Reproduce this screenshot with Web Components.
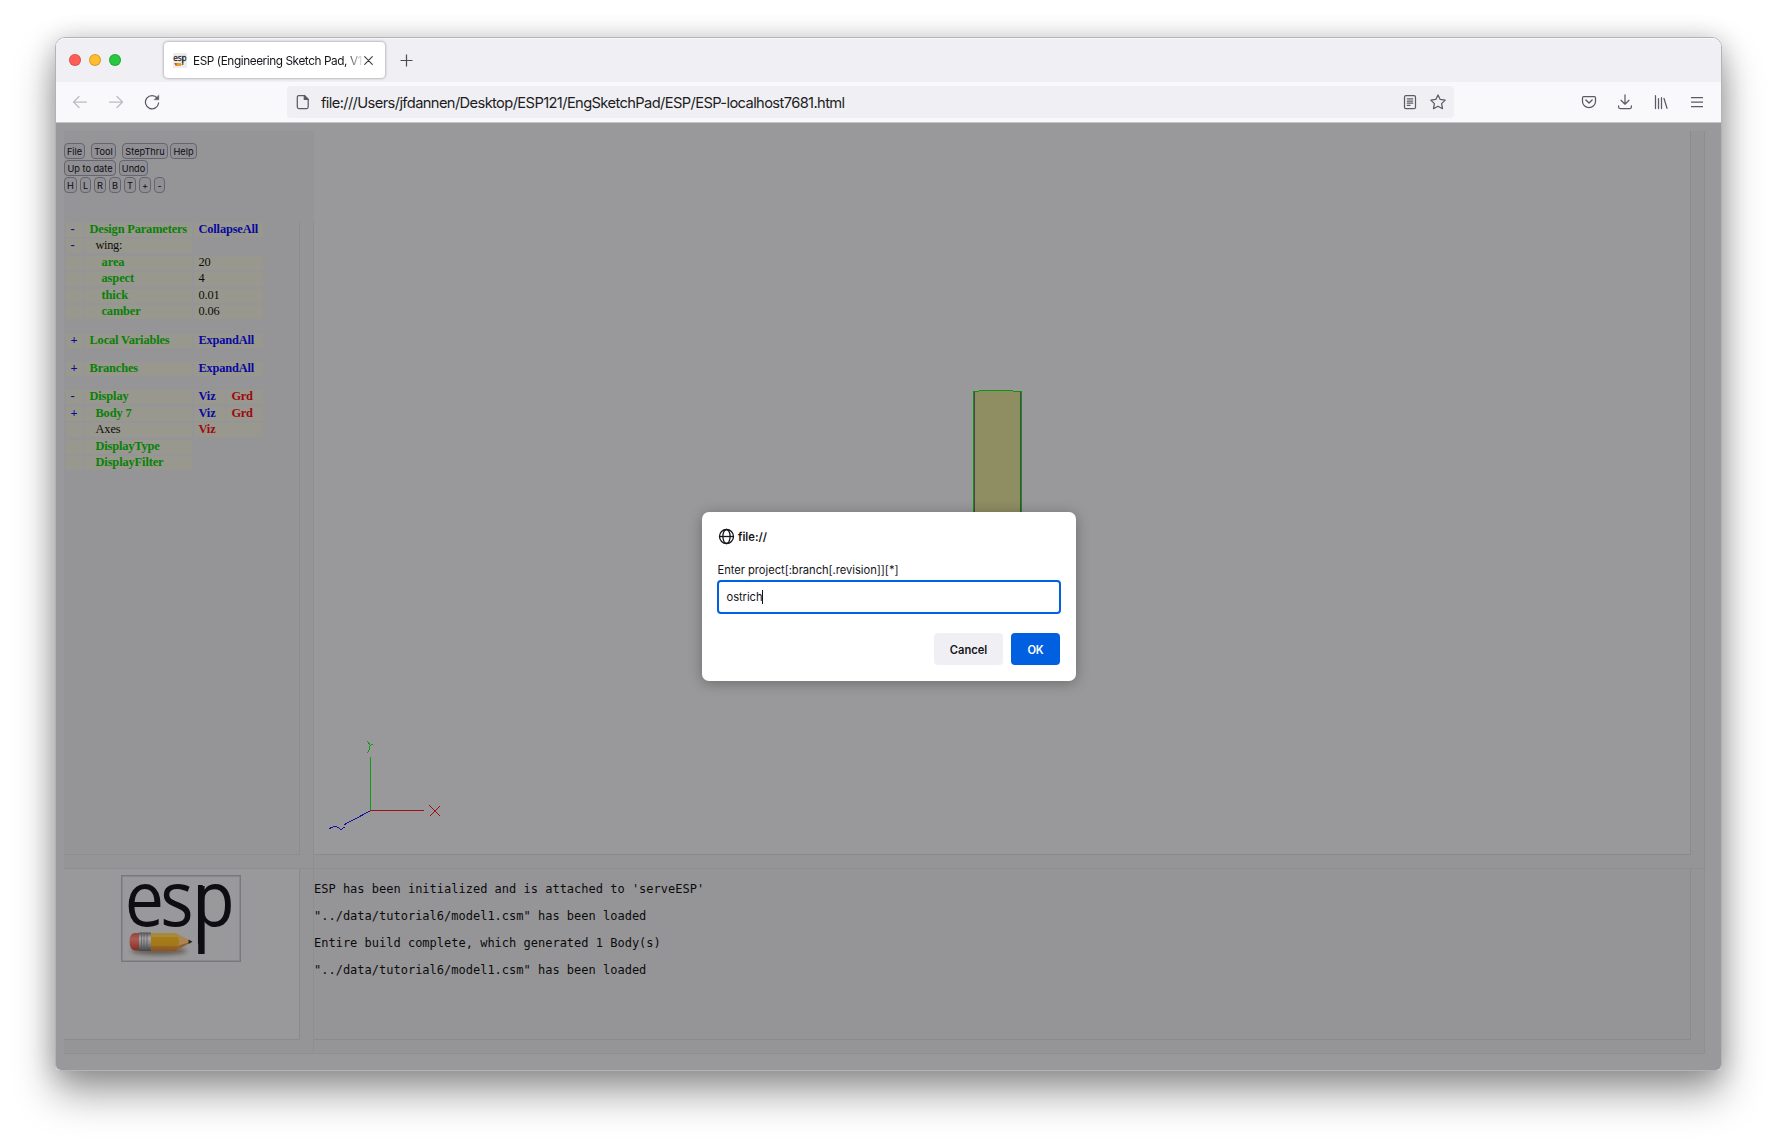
<!DOCTYPE html>
<html lang="en">
<head>
<meta charset="utf-8">
<title>ESP (Engineering Sketch Pad, V1.21)</title>
<style>
html,body{margin:0;height:100%;background:#fff;overflow:hidden}
body{font-family:Inter,"Liberation Sans",sans-serif;color:#15141a}
</style>
</head>
<body>
<app-window></app-window>
<script>
const define=(name,html,setup)=>customElements.define(name,class extends HTMLElement{
  constructor(){
    super();
    const t=document.createElement('template');
    t.innerHTML=html;
    this.attachShadow({mode:'open'}).append(t.content.cloneNode(true));
  }
  connectedCallback(){ if(setup) setup.call(this,this.shadowRoot); }
});

/* Text spread to an exact advance width through letter-spacing. */
define('fit-text',`<style>:host{display:inline-block;white-space:pre}span{display:inline-block;white-space:pre}</style><span><slot></slot></span>`,function(root){
  const w=+this.getAttribute('w'), s=root.querySelector('span');
  const n=this.textContent.length;
  s.style.letterSpacing=((w-s.getBoundingClientRect().width)/n).toFixed(3)+'px';
});

define('esp-logo',`<style>:host{display:block}svg{display:block;overflow:visible}text{font-family:"Open Sans",sans-serif;font-size:76px;fill:#0e0d11}</style>
<svg width="120" height="87" viewBox="0 0 120 87">
<defs>
<linearGradient id="y" x1="0" y1="0" x2="0" y2="1"><stop offset="0" stop-color="#a58a3c"/><stop offset=".22" stop-color="#a8893a"/><stop offset=".25" stop-color="#a87c18"/><stop offset=".7" stop-color="#a0771a"/><stop offset=".75" stop-color="#976326"/><stop offset="1" stop-color="#8a561f"/></linearGradient>
<linearGradient id="m" x1="0" y1="0" x2="0" y2="1"><stop offset="0" stop-color="#55555a"/><stop offset=".3" stop-color="#a8a8aa"/><stop offset=".6" stop-color="#858587"/><stop offset="1" stop-color="#424246"/></linearGradient>
<linearGradient id="r" x1="0" y1="0" x2="0" y2="1"><stop offset="0" stop-color="#8c453f"/><stop offset=".35" stop-color="#ab5a50"/><stop offset="1" stop-color="#7e2f2a"/></linearGradient>
<filter id="b" x="-20%" y="-80%" width="140%" height="260%"><feGaussianBlur stdDeviation="2"/></filter>
</defs>
<rect x=".75" y=".75" width="118.5" height="85.5" fill="none" stroke="#78787e" stroke-width="1.5"/>
<g transform="scale(.92 1)"><text y="51" x="4 42.8 77.2">esp</text></g>
<rect x="77.2" y="11" width="6.4" height="68" fill="#0e0d11"/>
<ellipse cx="38" cy="76" rx="28" ry="4" fill="#4a4030" opacity=".65" filter="url(#b)"/>
<path d="M20 58H14Q8.500 58 8.500 66.500T14 75.500H20Z" fill="url(#r)"/>
<rect x="18" y="57.500" width="12" height="18.500" fill="url(#m)"/>
<path d="M20.500 57.500v18.500M23 57.500v18.500M26 57.500v18.500" stroke="#55555a" stroke-width=".7"/>
<path d="M30 58H55Q58 60 57.500 63 59 67 57.500 70.500 58 74 55 76H30Z" fill="url(#y)"/>
<path d="M55 58 71 66.500 55 76Q58 74 57.500 70.500 59 67 57.500 63 58 60 55 58Z" fill="#ad8552"/>
<path d="M57.500 70.500 71 66.500 55 76Q58 74 57.500 70.500Z" fill="#8c5f37"/>
<path d="M67.500 64.600 71.500 66.700 67.500 69Z" fill="#222"/>
</svg>`);

define('tab-strip',`<style>
:host{display:flex;height:44px;background:#f0eff4;align-items:center;box-sizing:border-box;border-radius:9px 9px 0 0;border-top:1px solid #f7f7fa;padding-bottom:1px}
.lights{display:flex;gap:8px;margin-left:13px;width:95px}
.lights i{width:12px;height:12px;border-radius:50%;box-sizing:border-box;border:.5px solid rgba(0,0,0,.16)}
.tab{box-sizing:border-box;width:221px;height:36px;background:#fff;border-radius:4px;box-shadow:0 0 3px rgba(0,0,0,.45);display:flex;align-items:center;padding-left:9px;font-size:11.800px}
.fav{width:14px;height:15px;margin-right:6px;overflow:visible;flex:none}
.title{width:171px;margin-top:2px;flex:none;-webkit-mask-image:linear-gradient(90deg,#000 153px,transparent 171px);mask-image:linear-gradient(90deg,#000 153px,transparent 171px)}
.plus{margin-left:15px}
text{font-family:"Open Sans";font-size:9.500px;fill:#222}
</style>
<div class="lights"><i style="background:#ff5f57"></i><i style="background:#febc2e"></i><i style="background:#28c840"></i></div>
<div class="tab">
<svg class="fav" viewBox="0 0 14 15"><rect width="14" height="15" fill="#ededed"/><g transform="scale(.87 1)"><text x="0.200 5.600 9.900" y="8" stroke="#222" stroke-width=".25">esp</text></g><rect x="9.300" y="4" width="1" height="8" fill="#333"/><path d="M1.500 10h6l1.500 1.500L7.500 13h-4Q1.500 12.500 1.500 10Z" fill="#e89b2c"/><path d="M1.500 10h2v2.500h-1z" fill="#cf4630"/></svg>
<div class="title"><fit-text w="169">ESP (Engineering Sketch Pad, V1</fit-text></div>
<svg class="x" width="9" height="9" viewBox="0 0 9 9" stroke="#3c3b43" stroke-width="1.100" stroke-linecap="round"><path d="M.7.7 8.300 8.300M8.300.7.7 8.300"/></svg>
</div>
<svg class="plus" width="13" height="13" viewBox="0 0 13 13" stroke="#4d4c55" stroke-width="1.200"><path d="M6.500.5v12M.5 6.500h12"/></svg>`);

define('nav-bar',`<style>
:host{display:flex;box-sizing:border-box;height:41px;background:#f9f9fb;border-bottom:1px solid #c4c4c8;align-items:center;padding:0 0 0 16px}
svg{display:block;fill:none;stroke:#5b5b66;stroke-width:1.250;stroke-linecap:round;stroke-linejoin:round;flex:none}
.go{display:flex;gap:20px;width:215px}
.go .off{stroke:#bcbcc2}
.url{display:flex;align-items:center;box-sizing:border-box;width:1167px;height:32px;background:#f0f0f4;border-radius:4px;padding:0 8px;font-size:14.700px;color:#1d1c23}
.url fit-text{margin:1px auto 0 10px}
.url .s{margin-left:12px}
.tools{display:flex;gap:20px;margin-left:127px}
</style>
<div class="go">
<svg class="off" width="16" height="16" viewBox="0 0 16 16"><path d="M14.500 8H1.500M7 2.500 1.500 8 7 13.500"/></svg>
<svg class="off" width="16" height="16" viewBox="0 0 16 16"><path d="M1.500 8h13M9 2.500 14.500 8 9 13.500"/></svg>
<svg width="16" height="16" viewBox="0 0 16 16"><path d="M13.300 4.200A6.600 6.600 0 1 0 14.600 9"/><path d="M14.800 1.200v4.600h-4.600z" fill="#5b5b66" stroke-width=".4"/></svg>
</div>
<div class="url">
<svg width="16" height="16" viewBox="0 0 16 16"><path d="M3.800 1.500h5.500l3.900 3.900v7.600q0 1.500-1.500 1.500H3.800Q2.300 14.500 2.300 13V3q0-1.500 1.500-1.500Z"/><path d="M9.300 1.500v3.900h3.900Z" fill="#5b5b66"/></svg>
<fit-text w="523.5">file:///Users/jfdannen/Desktop/ESP121/EngSketchPad/ESP/ESP-localhost7681.html</fit-text>
<svg width="16" height="16" viewBox="0 0 16 16"><rect x="2.500" y="1.700" width="11" height="13" rx="1.500"/><path d="M5.300 4.800h5.400M5.300 7h5.400M5.300 9.200h5.400M5.300 11.400h2.700"/></svg>
<svg class="s" width="16" height="16" viewBox="0 0 16 16"><path d="M8 .9 10.200 5.400 15.200 6.100 11.600 9.600 12.500 14.700 8 12.300 3.500 14.700 4.400 9.600.8 6.100 5.800 5.400Z"/></svg>
</div>
<div class="tools">
<svg width="16" height="16" viewBox="0 0 16 16"><path d="M2.700 2.500h10.600q1.200 0 1.200 1.200V7.500a6.500 6 0 0 1-13 0V3.700q0-1.200 1.200-1.200Z"/><path d="M4.900 6.100 8 9.100 11.100 6.100" stroke-width="1.400"/></svg>
<svg width="16" height="16" viewBox="0 0 16 16"><path d="M8 .8V10M4 6.300 8 10.200 12 6.300M1.600 11.800V13q0 1.500 1.500 1.500h9.800q1.500 0 1.500-1.500V11.800"/></svg>
<svg width="16" height="16" viewBox="0 0 16 16"><path d="M2.500 1.700v12.800M5.500 4.500v10M8.500 3.700v10.800M11 4.500 14 14.300"/></svg>
<svg width="16" height="16" viewBox="0 0 16 16"><path d="M2 3.500h12M2 8h12M2 12.500h12" stroke-linecap="butt"/></svg>
</div>`);

define('tool-buttons',`<style>
:host{display:flex;flex-direction:column;gap:.8px;box-sizing:border-box;height:90px;padding-top:12.300px}
.r{display:flex;height:16.200px}
button{all:unset;box-sizing:border-box;height:16.200px;border:1px solid #66656f;border-radius:4px;background:#8f8f94;font:9.200px/14px Inter,sans-serif;color:#0e0d12;text-align:center;white-space:nowrap;padding-top:.5px}
</style>`,function(root){
  const rows=[[['File',21,0],['Tool',25,6],['StepThru',46,6],['Help',27,2]],
    [['Up to date',52,0],['Undo',29,3]],
    [['H',13,0],['L',11,3],['R',12,3],['B',12,3],['T',12,3],['+',12,3],['-',11,3]]];
  for(const row of rows){
    const r=document.createElement('div');r.className='r';
    for(const [t,w,m] of row){
      const b=document.createElement('button');b.textContent=t;
      b.style.width=w+'px';b.style.marginLeft=m+'px';r.append(b);
    }
    root.append(r);
  }
});

define('design-tree',`<style>
:host{display:block;box-sizing:border-box;padding:2px 0 0 2px;font:12.400px/12px "Liberation Serif",serif;color:#0c0c0c}
.r{display:grid;grid-template-columns:17px 107px 69px;column-gap:2px}
.c{background:#99988f;height:14px;white-space:pre}
.two{display:grid;grid-template-columns:31px 36px;column-gap:2px}
.g{color:#088008;font-weight:bold}.b{color:#0808a2;font-weight:bold}.d{color:#9e080e;font-weight:bold}
.p{padding-left:4.500px}
</style>`,function(root){
  /* [row gap, sign, indent, label, label class, value cells, label width] */
  const data=[[0,'-',0,'Design Parameters','g',[['CollapseAll','b',59.500]],97.500],
   [2,'-',6,'wing:','',[],26.500],
   [3,'',12,'area','g',[['20','',12]],23],
   [2,'',12,'aspect','g',[['4','',6]],32.500],
   [3,'',12,'thick','g',[['0.01','',21]],26.500],
   [2,'',12,'camber','g',[['0.06','',21]],39],
   [15,'+',0,'Local Variables','g',[['ExpandAll','b',55.500]],80],
   [14,'+',0,'Branches','g',[['ExpandAll','b',55.500]],48.500],
   [14,'-',0,'Display','g',[['Viz','b',17],['Grd','d',21]],39],
   [3,'+',6,'Body 7','g',[['Viz','b',17],['Grd','d',21]],36],
   [2,'',6,'Axes','',[['Viz','d',17]],25],
   [3,'',6,'DisplayType','g',[],64],
   [2,'',6,'DisplayFilter','g',[],68]];
  root.append(...data.map(([gap,sign,ind,label,cls,vals,w])=>{
    const r=document.createElement('div');r.className='r';r.style.marginTop=gap+'px';
    const v=vals.map(([t,c,vw])=>`<div class="c p ${c}"><fit-text w="${vw}">${t}</fit-text></div>`).join('');
    r.innerHTML=`<div class="c b p">${sign}</div><div class="c ${cls}" style="padding-left:${4.5+ind}px"><fit-text w="${w}">${label}</fit-text></div>${vals.length>1?`<div class="two">${v}</div>`:v}`;
    return r;
  }));
});

define('scene-view',`<style>:host{display:block}svg{display:block}</style>
<svg width="1376" height="723" viewBox="314 131 1376 723" fill="none" shape-rendering="crispEdges">
<rect x="975" y="391" width="46" height="180" fill="#8f8d62"/>
<path d="M974.500 392v180M1020.500 392v180" stroke="#48484a"/>
<path d="M973.500 391v180M1021.500 391v180M973 391.500h6M1013 391.500h9M979 390.500h34" stroke="#129212"/>
<path d="M370.500 757v53" stroke="#129c12"/>
<path d="M367.500 741.500 370.500 745.500 372.800 744.200M370 746 369.500 749.500 367.300 753" stroke="#129c12"/>
<path d="M370 810.500h54M429.500 805.500 440 816M440 806 430 816" stroke="#9c1212"/>
<path d="M370 811 344.500 824.500M345.500 826.500 341 829.500 336.500 826.500H334L329 828.700" stroke="#1212a0"/>
</svg>`);

define('message-log',`<style>:host{display:block;box-sizing:border-box;padding-top:7px;font:12px/27px "DejaVu Sans Mono",monospace;color:#0b0b0c}
p{margin:0;white-space:pre}</style><slot></slot>`,function(root){
  const lines=["ESP has been initialized and is attached to 'serveESP'",'"../data/tutorial6/model1.csm" has been loaded','Entire build complete, which generated 1 Body(s)','"../data/tutorial6/model1.csm" has been loaded'];
  for(const l of lines){const p=document.createElement('p');p.textContent=l;root.append(p);}
});

define('sketch-page',`<style>
:host{display:block;flex:1;background:#99999b;padding:8px 0 0 8px;border-radius:0 0 5px 5px}
.g{display:grid;grid-template-columns:250px 1391px;grid-template-rows:724px 14px 185px}
.left,.main,.low{box-sizing:border-box}
.left{background:#959597;grid-row:1/3;display:flex;flex-direction:column;border-bottom:1px solid #8f8f91}
.tree{flex:1;border-right:1px solid #8f8f91;padding-right:13px;padding-bottom:13px;display:flex}
.tree>design-tree{flex:1;border-right:1px solid #8d8d8f;border-bottom:1px solid #8d8d8f}
.main{grid-row:1/3;background:#959597;padding:0 13px 13px 0;border-right:1px solid #8d8d8f;border-bottom:1px solid #8f8f91}
scene-view{background:#99999b;border-right:1px solid #8b8b8d;border-bottom:1px solid #8b8b8d;width:1376px;height:723px;overflow:hidden}
.low{background:#959597;padding:0 13px 13px 0;border-right:1px solid #8f8f91;border-bottom:1px solid #8f8f91}
.low>div{box-sizing:border-box;height:171px;border-right:1px solid #8b8b8d;border-bottom:1px solid #8b8b8d}
.low>.logo{background:#99999b;display:flex;justify-content:center;padding:6px 1px 0 0}
</style>
<div class="g">
<div class="left"><tool-buttons></tool-buttons><div class="tree"><design-tree></design-tree></div></div>
<div class="main"><scene-view></scene-view></div>
<div class="low"><div class="logo"><esp-logo></esp-logo></div></div>
<div class="low"><div><message-log></message-log></div></div>
</div>`);

define('prompt-dialog',`<style>
:host{display:flex;flex-direction:column;box-sizing:border-box;width:374px;height:169px;background:#fff;border-radius:7px;box-shadow:0 2px 14px rgba(0,0,0,.3);padding:16px 15px;font-size:11.200px;color:#15141a}
.h{display:flex;align-items:center;gap:3px;height:17px;padding-left:1px;font-weight:600}
.l{margin-top:17px;height:16px;line-height:17px;padding-left:.5px}
.i{box-sizing:border-box;width:344px;height:34px;margin-top:2px;border:2px solid #0060df;border-radius:4px;display:flex;align-items:center;padding-left:7.500px}
.i i{width:1px;height:14px;background:#15141a}
.f{display:flex;justify-content:flex-end;gap:8px;margin-top:19px;padding-right:1px}
.f div{box-sizing:border-box;height:32px;border-radius:4px;display:flex;align-items:center;justify-content:center;font-weight:600;background:#f0f0f4;padding-top:1px}
</style>
<div class="h"><svg width="17" height="17" viewBox="0 0 17 17" fill="none" stroke="#15141a" stroke-width="1.300"><circle cx="8.500" cy="8.500" r="7"/><ellipse cx="8.500" cy="8.500" rx="3.600" ry="7"/><path d="M1.500 8.500h14"/></svg><fit-text w="29">file://</fit-text></div>
<div class="l"><fit-text w="181">Enter project[:branch[.revision]][*]</fit-text></div>
<div class="i"><fit-text w="36">ostrich</fit-text><i></i></div>
<div class="f"><div style="width:69px"><fit-text w="37.5">Cancel</fit-text></div><div style="width:49px;background:#0060df;color:#fff"><fit-text w="16">OK</fit-text></div></div>`);

define('app-window',`<style>
:host{display:flex;flex-direction:column;box-sizing:border-box;position:relative;width:1667px;height:1034px;margin:37px 0 0 55px;border:1px solid #b3b3b6;border-radius:10px 10px 6px 6px;box-shadow:0 22px 40px rgba(0,0,0,.38),0 2px 26px rgba(0,0,0,.2)}
prompt-dialog{position:absolute;left:646px;top:474px}
</style><tab-strip></tab-strip><nav-bar></nav-bar><sketch-page></sketch-page><prompt-dialog></prompt-dialog>`);
</script>
</body>
</html>
